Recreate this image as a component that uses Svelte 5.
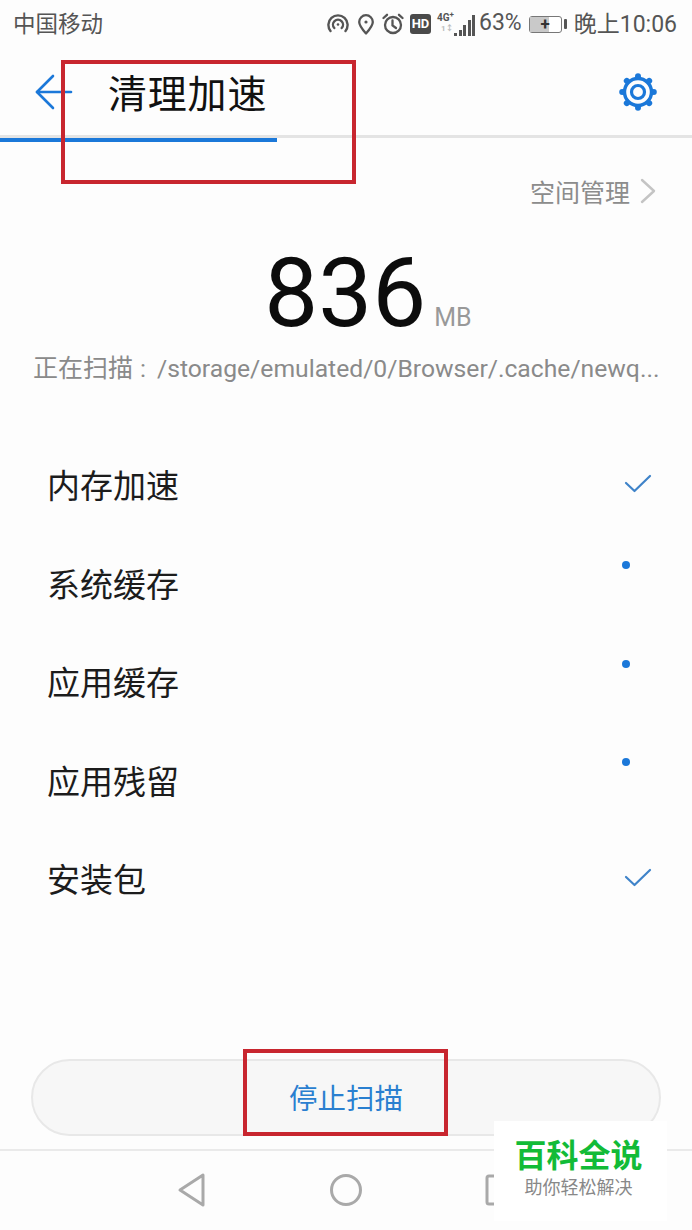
<script lang="ts">
	// Cleanup scan screen
	const rows = [
		{ name: '内存加速', state: 'done' },
		{ name: '系统缓存', state: 'busy' },
		{ name: '应用缓存', state: 'busy' },
		{ name: '应用残留', state: 'busy' },
		{ name: '安装包', state: 'done' }
	];

	const signal = [3, 6, 11, 16, 21];
	const gearBumps = [0, 45, 90, 135, 180, 225, 270, 315];
</script>

<div class="screen">
	<div class="status-bar">
		<span class="carrier">中国移动</span>
		<div class="status-right">
			<svg class="ic" width="22" height="22" viewBox="0 0 22 22" fill="none" stroke="#555" stroke-width="2.4" stroke-linecap="round">
				<path d="M3.5 18a9.600 9.600 0 1 1 15 0" />
				<path d="M7.300 15a5 5 0 1 1 7.400 0" />
				<circle cx="11" cy="11.500" r="1.300" fill="#555" stroke="none" />
			</svg>
			<svg class="ic pin" width="18" height="22" viewBox="0 0 18 22" fill="none" stroke="#555" stroke-width="2.300">
				<path d="M9 20.500C5 16 2.200 12.600 2.200 9a6.800 6.800 0 0 1 13.600 0c0 3.600-2.800 7-6.800 11.500z" stroke-linejoin="round" />
				<circle cx="9" cy="9" r="1.600" fill="#555" stroke="none" />
			</svg>
			<svg class="ic alarm" width="22" height="22" viewBox="0 0 22 22" fill="none" stroke="#555" stroke-width="2.300" stroke-linecap="round">
				<circle cx="11" cy="12" r="8" />
				<path d="M10.500 7.500v5l3.500 2.500" />
				<path d="M1.500 5 5 1.800M20.500 5 17 1.800" />
			</svg>
			<span class="hd">HD</span>
			<div class="net">
				<span class="net-type">4G<sup>+</sup></span>
				<span class="net-sub">1↕</span>
			</div>
			<div class="signal">
				{#each signal as h}
					<i style="height: {h}px"></i>
				{/each}
			</div>
			<span class="pct">63%</span>
			<div class="battery">
				<div class="battery-body">
					<div class="battery-fill"></div>
					<span class="plus">+</span>
				</div>
				<div class="battery-tip"></div>
			</div>
			<span class="clock">晚上10:06</span>
		</div>
	</div>

	<header class="title-bar">
		<svg class="back" width="38" height="36" viewBox="0 0 38 36" fill="none" stroke="#1b78d9" stroke-width="2.600" stroke-linecap="round" stroke-linejoin="round">
			<path d="M18 2 2 18l16 16" />
			<path d="M2 18h34" />
		</svg>
		<h1>清理加速</h1>
		<svg class="gear" width="38" height="38" viewBox="0 0 38 38" fill="none" stroke="#1b78d9">
			<circle cx="19" cy="19" r="13.500" stroke-width="3.400" />
			<circle cx="19" cy="19" r="6.500" stroke-width="3.200" />
			{#each gearBumps as angle}
				<circle cx="19" cy="3.200" r="3" fill="#1b78d9" stroke="none" transform="rotate({angle} 19 19)" />
			{/each}
		</svg>
	</header>

	<div class="progress"><div class="progress-fill" style="width: 40%"></div></div>

	<div class="space-link">
		<span>空间管理</span>
		<svg width="16" height="26" viewBox="0 0 16 26" fill="none" stroke="#c4c4c4" stroke-width="2.400" stroke-linecap="round" stroke-linejoin="round">
			<path d="M2 2l12 11L2 24" />
		</svg>
	</div>

	<div class="amount">
		<span class="num">836</span>
		<span class="unit">MB</span>
	</div>

	<p class="path">正在扫描<span class="path-value"><span class="colon">:</span>/storage/emulated/0/Browser/.cache/newq...</span></p>

	<ul class="rows">
		{#each rows as row}
			<li>
				<span class="row-name">{row.name}</span>
				{#if row.state === 'done'}
					<svg class="check" width="28" height="20" viewBox="0 0 28 20" fill="none" stroke="#3f83c9" stroke-width="2.200" stroke-linecap="round" stroke-linejoin="round">
						<path d="M2 9l8.500 8L26 2" />
					</svg>
				{:else}
					<span class="dot"></span>
				{/if}
			</li>
		{/each}
	</ul>

	<div class="footer">
		<button class="stop">停止扫描</button>
	</div>

	<nav class="nav-bar">
		<svg width="30" height="36" viewBox="0 0 30 36" fill="none" stroke="#a9a9a9" stroke-width="3" stroke-linejoin="round">
			<path d="M26 3v30L3 18z" />
		</svg>
		<svg width="34" height="34" viewBox="0 0 34 34" fill="none" stroke="#a9a9a9" stroke-width="3">
			<circle cx="17" cy="17" r="14.500" />
		</svg>
		<svg width="32" height="34" viewBox="0 0 32 34" fill="none" stroke="#a9a9a9" stroke-width="3" stroke-linejoin="round">
			<rect x="2" y="3" width="28" height="28" rx="2" />
		</svg>
	</nav>

	<!-- annotations and watermark sit on top of the screenshot -->
	<div class="mark mark-title"></div>
	<div class="mark mark-stop"></div>
	<div class="watermark">
		<span class="wm-main">百科全说</span>
		<span class="wm-sub">助你轻松解决</span>
	</div>
</div>

<style>
	:global(body) {
		margin: 0;
		background: #fdfdfd;
	}

	.screen {
		position: relative;
		width: 692px;
		height: 1230px;
		overflow: hidden;
		background: #fdfdfd;
		display: flex;
		flex-direction: column;
		font-family: 'Noto Sans CJK SC', 'Roboto', sans-serif;
	}

	/* Status bar */
	.status-bar {
		height: 48px;
		flex: none;
		display: flex;
		align-items: center;
		justify-content: space-between;
		padding: 0 15px 0 13px;
		color: #555;
		font-family: 'Roboto', 'Noto Sans CJK SC', sans-serif;
	}

	.carrier {
		font-size: 22.500px;
		margin-bottom: 4px;
	}

	.status-right {
		display: flex;
		align-items: center;
	}

	.ic {
		flex: none;
	}

	.pin {
		margin-left: 8px;
	}

	.alarm {
		margin-left: 6.500px;
	}

	.hd {
		margin-left: 6.500px;
		width: 21px;
		height: 20px;
		border-radius: 3px;
		background: #4a4a4a;
		color: #fff;
		font-size: 13px;
		font-weight: 700;
		line-height: 20px;
		text-align: center;
	}

	.net {
		margin: 0 -2px 0 6px;
		width: 19px;
		height: 24px;
		display: flex;
		flex-direction: column;
		font-size: 10px;
		font-weight: 700;
		line-height: 11px;
	}

	.net-type sup {
		font-size: 8px;
		line-height: 0;
	}

	.net-sub {
		color: #bbb;
		font-size: 8px;
		padding-left: 4px;
	}

	.signal {
		display: flex;
		align-items: flex-end;
		gap: 1.500px;
		height: 21px;
		margin-top: 2px;
	}

	.signal i {
		display: block;
		width: 3px;
		background: #555;
	}

	.pct {
		margin: 0 0 4px 4px;
		font-size: 23px;
	}

	.battery {
		margin-left: 7px;
		display: flex;
		align-items: center;
		gap: 2px;
	}

	.battery-body {
		position: relative;
		width: 33px;
		height: 17px;
		border: 1.500px solid #777;
		border-radius: 3px;
		box-sizing: border-box;
		background: #fff;
	}

	.battery-fill {
		width: 63%;
		height: 100%;
		background: #c9c9c9;
	}

	.plus {
		position: absolute;
		inset: 0;
		text-align: center;
		color: #333;
		font-size: 17px;
		font-weight: 700;
		line-height: 14px;
	}

	.battery-tip {
		width: 3px;
		height: 10px;
		background: #555;
		border-radius: 1px;
	}

	.clock {
		margin: 0 0 4px 7px;
		font-size: 23px;
	}

	/* Title bar */
	.title-bar {
		height: 87px;
		flex: none;
		display: flex;
		align-items: center;
		padding: 0 35px 0 35px;
		box-sizing: border-box;
	}

	.title-bar h1 {
		margin: 0 0 2px 35px;
		flex: 1;
		font-size: 39px;
		font-weight: 400;
		color: #111;
		letter-spacing: 0.800px;
	}

	.progress {
		height: 7px;
		flex: none;
		background: linear-gradient(#e4e4e4 0 3px, transparent 3px);
	}

	.progress-fill {
		height: 4px;
		position: relative;
		top: 3px;
		background: #1b78d9;
	}

	/* Space link and total */
	.space-link {
		margin-top: 33px;
		padding-right: 36px;
		display: flex;
		justify-content: flex-end;
		align-items: center;
		gap: 10px;
		height: 32px;
		color: #8c8c8c;
		font-size: 25px;
	}

	.amount {
		margin-top: 36px;
		display: flex;
		justify-content: center;
		align-items: baseline;
		gap: 8px;
		height: 100px;
		padding-left: 44px;
		font-family: 'Roboto', sans-serif;
	}

	.num {
		font-size: 96px;
		line-height: 100px;
		color: #0c0c0c;
		font-weight: 400;
	}

	.unit {
		font-size: 25px;
		color: #999;
	}

	.path {
		margin: 6px 0 0;
		padding-left: 33px;
		height: 34px;
		line-height: 34px;
		color: #8a8a8a;
		font-size: 25px;
		white-space: nowrap;
	}

	.path-value {
		font-family: 'Roboto', sans-serif;
		font-size: 24.700px;
	}

	.colon {
		margin: 0 11px 0 7px;
	}

	/* Items */
	.rows {
		list-style: none;
		margin: 52px 0 0;
		padding: 0 40px 0 47px;
	}

	.rows li {
		height: 98.500px;
		display: flex;
		align-items: center;
		justify-content: space-between;
	}

	.row-name {
		font-size: 33px;
		color: #1c1c1c;
	}

	.dot {
		width: 8px;
		height: 8px;
		margin: -35px 22px 0 0;
		border-radius: 50%;
		background: #1b78d9;
	}

	/* Stop button */
	.footer {
		position: absolute;
		left: 31px;
		right: 31px;
		top: 1059px;
	}

	.stop {
		width: 100%;
		height: 77px;
		border: 2px solid #e8e8e8;
		border-radius: 39px;
		background: #f7f7f7;
		color: #2a7fd0;
		font-family: inherit;
		font-size: 28.500px;
		padding: 0 0 2px;
	}

	.nav-bar {
		position: absolute;
		left: 0;
		right: 0;
		bottom: 0;
		height: 81px;
		border-top: 2px solid #eaeaea;
		display: flex;
		align-items: center;
		justify-content: center;
		gap: 122px;
		padding: 0 0 2px 2px;
		box-sizing: border-box;
	}

	/* Overlays */
	.mark {
		position: absolute;
		box-sizing: border-box;
		border: 4px solid #c8262f;
	}

	.mark-title {
		left: 61px;
		top: 60px;
		width: 295px;
		height: 124px;
	}

	.mark-stop {
		left: 243px;
		top: 1049px;
		width: 205px;
		height: 87px;
	}

	.watermark {
		position: absolute;
		left: 494px;
		top: 1121px;
		width: 173px;
		height: 100px;
		background: #fff;
		display: flex;
		flex-direction: column;
		align-items: center;
		padding: 11px 4px 0 0;
		box-sizing: border-box;
	}

	.wm-main {
		font-size: 32px;
		font-weight: 700;
		color: #12bb37;
		line-height: 42px;
	}

	.wm-sub {
		font-size: 18px;
		color: #888;
		line-height: 24px;
	}
</style>
